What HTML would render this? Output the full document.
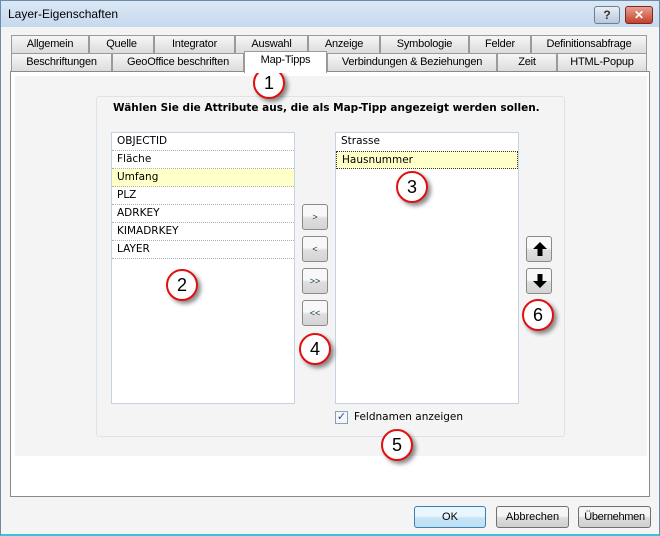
<!DOCTYPE html>
<html><head><meta charset="utf-8"><style>
*{margin:0;padding:0;box-sizing:border-box}
body{width:660px;height:536px;overflow:hidden;font-family:"Liberation Sans",sans-serif;font-size:11px;background:#fff;position:relative}
.win{position:absolute;left:0;top:0;width:660px;height:536px;background:#f4f4f4;border:1px solid #6a8caa;border-bottom:2px solid #3cc0e0}
.title{position:absolute;left:0;top:0;width:658px;height:26px;background:linear-gradient(#dbe8f5,#c6d9ee);}
.title span{position:absolute;left:7px;top:6px;font-size:12px;color:#000}
.tb{position:absolute;top:5px;height:18px;border:1px solid #6d7f96;border-radius:3px;font-weight:bold;color:#fff;text-align:center;font-size:12px;line-height:16px}
.tab{position:absolute;height:18px;border:1px solid #9a9a9a;border-bottom:none;background:linear-gradient(#f6f6f6,#dcdcdc);text-align:center;line-height:17px;font-size:11px;color:#000;letter-spacing:-0.2px}
.panel{position:absolute;left:9px;top:70px;width:640px;height:426px;background:#fff;border:1px solid #8a8a8a}
.inner{position:absolute;left:4px;top:4px;width:632px;height:380px;background:#f4f4f4}
.grp{position:absolute;left:95px;top:95px;width:469px;height:341px;border:1px solid #dce3ea;border-radius:3px}
.list{position:absolute;background:#fff;border:1px solid #c5d3e3}
.row{height:18px;border-bottom:1px dotted #b0b0b0;padding-left:5px;line-height:17px;font-family:"DejaVu Sans",sans-serif;font-size:10.5px}
.sel{background:#ffffc8}
.btn{position:absolute;width:26px;height:26px;border:1px solid #8a8a8a;border-radius:3px;background:linear-gradient(#f8f8f8 45%,#dedede 55%,#d4d4d4);text-align:center;line-height:24px;font-size:9px;color:#134}
.btn svg{position:absolute;left:5px;top:4px}
.circ{position:absolute;width:32px;height:32px;border:2px solid #e01010;border-radius:50%;background:#fff;box-shadow:3px 3px 4px rgba(0,0,0,.45);text-align:center;line-height:28px;font-size:18px}
.bb{position:absolute;top:505px;height:22px;border:1px solid #707070;border-radius:3px;background:linear-gradient(#f5f5f5 45%,#dcdcdc 55%,#d0d0d0);text-align:center;line-height:20px;font-size:11px}
</style></head><body>
<div class="win">
<div class="title"><span>Layer-Eigenschaften</span>
<div class="tb" style="left:593px;width:26px;background:linear-gradient(#e8eef6,#b9c8da);color:#333">?</div>
<div class="tb" style="left:624px;width:28px;background:linear-gradient(#e8a090,#c4402a);border-color:#7a2a20">✕</div>
</div>
<div class="tab" style="left:10px;top:34px;width:78px">Allgemein</div>
<div class="tab" style="left:88px;top:34px;width:65px">Quelle</div>
<div class="tab" style="left:153px;top:34px;width:81px">Integrator</div>
<div class="tab" style="left:234px;top:34px;width:73px">Auswahl</div>
<div class="tab" style="left:307px;top:34px;width:72px">Anzeige</div>
<div class="tab" style="left:379px;top:34px;width:89px">Symbologie</div>
<div class="tab" style="left:468px;top:34px;width:62px">Felder</div>
<div class="tab" style="left:530px;top:34px;width:116px">Definitionsabfrage</div>
<div class="tab" style="left:10px;top:52px;width:101px">Beschriftungen</div>
<div class="tab" style="left:111px;top:52px;width:132px">GeoOffice beschriften</div>
<div class="tab" style="left:326px;top:52px;width:170px">Verbindungen &amp; Beziehungen</div>
<div class="tab" style="left:496px;top:52px;width:60px">Zeit</div>
<div class="tab" style="left:556px;top:52px;width:90px">HTML-Popup</div>
<div class="panel"><div class="inner"></div></div>
<div class="tab" style="left:243px;top:50px;width:83px;height:22px;background:#fff;z-index:2">Map-Tipps</div>
<div class="grp"></div>
<div style="position:absolute;left:112px;top:101px;font-weight:bold;font-family:'DejaVu Sans',sans-serif;font-size:10.5px">Wählen Sie die Attribute aus, die als Map-Tipp angezeigt werden sollen.</div>
<div class="list" style="left:110px;top:131px;width:184px;height:272px">
<div class="row">OBJECTID</div><div class="row">Fläche</div><div class="row sel">Umfang</div><div class="row">PLZ</div><div class="row">ADRKEY</div><div class="row">KIMADRKEY</div><div class="row">LAYER</div></div>
<div class="list" style="left:334px;top:131px;width:184px;height:272px">
<div class="row" style="border:none">Strasse</div><div class="row sel" style="border:1px dotted #333">Hausnummer</div></div>
<div class="btn" style="left:301px;top:203px">&gt;</div>
<div class="btn" style="left:301px;top:235px">&lt;</div>
<div class="btn" style="left:301px;top:267px">&gt;&gt;</div>
<div class="btn" style="left:301px;top:299px">&lt;&lt;</div>
<div class="btn" style="left:525px;top:235px"><svg width="16" height="16" viewBox="0 0 16 16"><path d="M8 1 L15 8 L10.5 8 L10.5 15 L5.5 15 L5.5 8 L1 8 Z" fill="#000"/></svg></div>
<div class="btn" style="left:525px;top:267px"><svg width="16" height="16" viewBox="0 0 16 16"><path d="M8 15 L15 8 L10.5 8 L10.5 1 L5.5 1 L5.5 8 L1 8 Z" fill="#000"/></svg></div>
<div style="position:absolute;left:334px;top:410px;width:13px;height:13px;border:1px solid #8aa0b8;background:#f4f6f8;font-size:11px;line-height:11px;text-align:center;color:#2a4a9a">✓</div>
<div style="position:absolute;left:353px;top:410px;font-family:'DejaVu Sans',sans-serif;font-size:10.5px">Feldnamen anzeigen</div>
<div class="circ" style="left:252px;top:66px">1</div>
<div class="circ" style="left:165px;top:268px">2</div>
<div class="circ" style="left:395px;top:170px">3</div>
<div class="circ" style="left:298px;top:332px">4</div>
<div class="circ" style="left:380px;top:428px">5</div>
<div class="circ" style="left:521px;top:298px">6</div>
<div class="bb" style="left:413px;width:72px;border-color:#3c7fb1;background:linear-gradient(#eaf6fd 45%,#c4e5f6 55%,#bfe0f3)">OK</div>
<div class="bb" style="left:495px;width:73px">Abbrechen</div>
<div class="bb" style="left:577px;width:73px;letter-spacing:-0.3px">Übernehmen</div>
</div>
</body></html>
